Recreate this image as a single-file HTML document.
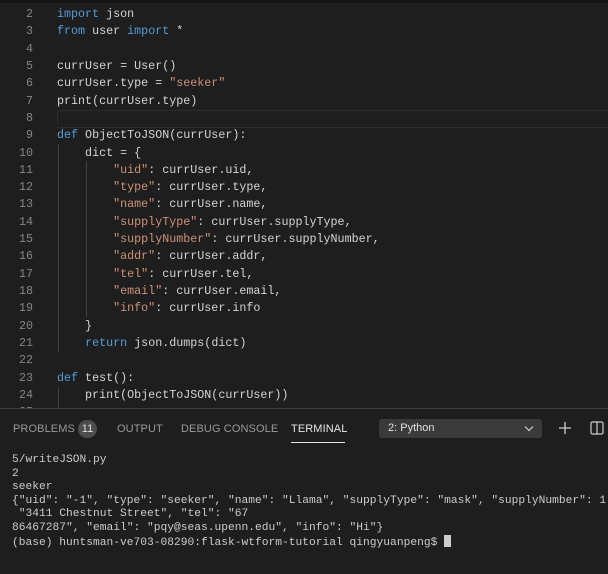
<!DOCTYPE html>
<html><head><style>
body{margin:0;width:608px;height:573px;background:#1e1e1e;overflow:hidden;position:relative;font-family:"Liberation Mono",monospace;}
#ed{position:absolute;left:0;top:0;width:608px;height:408px;overflow:hidden;background:#1e1e1e;}
#top{position:absolute;left:0;top:0;width:608px;height:3px;background:#141414;}
.ln{position:absolute;left:0;width:33px;text-align:right;color:#858585;font-size:11.7px;line-height:17.32px;}
.cd{position:absolute;left:57px;color:#d4d4d4;font-size:11.7px;line-height:17.32px;white-space:pre;}
.k{color:#569cd6}.s{color:#ce9178}.r{color:#c586c0}
.g{position:absolute;width:1px;background:#404040;}
#cur{position:absolute;left:57px;top:110px;width:560px;height:16px;border:1px solid #2c2c2c;}
#panel{position:absolute;left:0;top:408px;width:608px;height:165px;background:#1e1e1e;border-top:1px solid #3c3c3c;font-family:"Liberation Sans",sans-serif;}
.tab{position:absolute;top:14px;font-size:11px;color:#9a9a9a;letter-spacing:0.1px;}
#term{position:absolute;left:12px;top:45px;font-family:"Liberation Mono",monospace;font-size:11.25px;line-height:13.5px;color:#cccccc;white-space:pre;}
</style></head><body>
<div id="ed">
<div id="top"></div>
<div id="cur"></div>
<div class="g" style="left:58px;top:144px;height:208px"></div>
<div class="g" style="left:86px;top:161px;height:156px"></div>
<div class="g" style="left:58px;top:387px;height:21px"></div>
<div class="ln" style="top:6px">2<br>3<br>4<br>5<br>6<br>7<br>8<br>9<br>10<br>11<br>12<br>13<br>14<br>15<br>16<br>17<br>18<br>19<br>20<br>21<br>22<br>23<br>24<br>25</div>
<div class="cd" style="top:6px"><span class="k">import</span> json
<span class="k">from</span> user <span class="k">import</span> *

currUser = User()
currUser.type = <span class="s">"seeker"</span>
print(currUser.type)

<span class="k">def</span> ObjectToJSON(currUser):
    dict = {
        <span class="s">"uid"</span>: currUser.uid,
        <span class="s">"type"</span>: currUser.type,
        <span class="s">"name"</span>: currUser.name,
        <span class="s">"supplyType"</span>: currUser.supplyType,
        <span class="s">"supplyNumber"</span>: currUser.supplyNumber,
        <span class="s">"addr"</span>: currUser.addr,
        <span class="s">"tel"</span>: currUser.tel,
        <span class="s">"email"</span>: currUser.email,
        <span class="s">"info"</span>: currUser.info
    }
    <span class="k">return</span> json.dumps(dict)

<span class="k">def</span> test():
    print(ObjectToJSON(currUser))
</div>
</div>
<div id="panel">
<div class="tab" style="left:13px">PROBLEMS</div>
<div style="position:absolute;left:78px;top:11px;width:19px;height:18px;border-radius:9px;background:#4d4d4d;color:#e0e0e0;font-size:11px;text-align:center;line-height:18px">11</div>
<div class="tab" style="left:117px">OUTPUT</div>
<div class="tab" style="left:181px">DEBUG CONSOLE</div>
<div class="tab" style="left:291px;color:#e7e7e7">TERMINAL</div>
<div style="position:absolute;left:291px;top:33px;width:54px;height:1px;background:#e7e7e7"></div>
<div style="position:absolute;left:379px;top:10px;width:163px;height:19px;background:#3a3a3a;border-radius:3px;color:#e0e0e0;font-size:11px;line-height:19px">
<span style="position:absolute;left:9px">2: Python</span>
<svg style="position:absolute;left:145px;top:6px" width="10" height="7"><path d="M1 1.5L5 5.5L9 1.5" stroke="#ccc" stroke-width="1.2" fill="none"/></svg></div>
<svg style="position:absolute;left:558px;top:12px" width="14" height="14"><path d="M7 1V13M1 7H13" stroke="#ccc" stroke-width="1.3"/></svg>
<svg style="position:absolute;left:590px;top:12px" width="14" height="14"><rect x="1" y="1" width="12" height="12" rx="1.5" stroke="#ccc" fill="none" stroke-width="1.2"/><path d="M7 1V13" stroke="#ccc" stroke-width="1.2"/></svg>
<div id="term">5/writeJSON.py
2
seeker
{"uid": "-1", "type": "seeker", "name": "Llama", "supplyType": "mask", "supplyNumber": 1
 "3411 Chestnut Street", "tel": "67
86467287", "email": "pqy@seas.upenn.edu", "info": "Hi"}
(base) huntsman-ve703-08290:flask-wtform-tutorial qingyuanpeng$ <span style="display:inline-block;width:7px;height:12px;background:#cccccc;vertical-align:-2px"></span></div>
</div>
</body></html>
